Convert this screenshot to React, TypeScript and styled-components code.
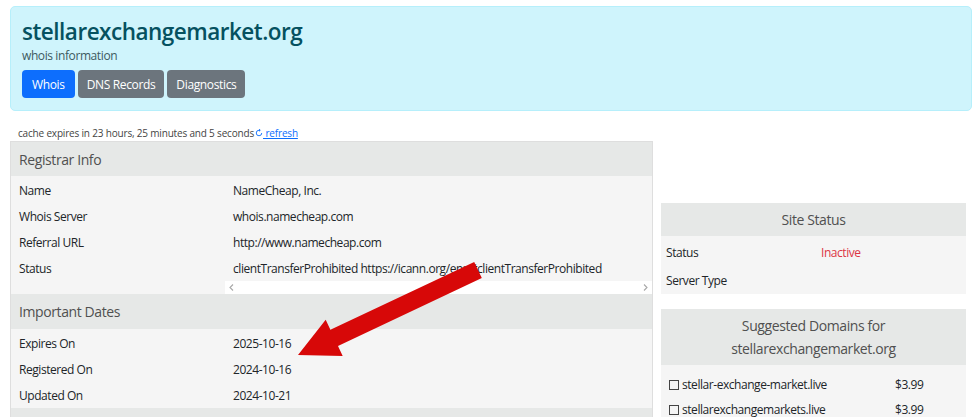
import React from "react";
import styled, { createGlobalStyle } from "styled-components";

const GlobalStyle = createGlobalStyle`
  html, body { margin: 0; padding: 0; background: #fff; }
  body { font-family: "Open Sans", "Noto Sans", Arial, sans-serif; color: #212529; }
  * { box-sizing: border-box; }
`;

const Page = styled.div`
  position: relative;
  width: 974px;
  height: 417px;
  overflow: hidden;
  padding: 6px 2px 0 10px;
`;

const Hero = styled.header`
  height: 105px;
  background: #cff4fc;
  border: 1px solid #b6effb;
  border-radius: 5px;
  padding: 9px 11px 0;
`;

const Title = styled.h1`
  margin: 0;
  font-size: 22.5px;
  line-height: 32px;
  font-weight: 600;
  color: #055160;
  letter-spacing: -0.5px;
`;

const Subtitle = styled.div`
  font-size: 12px;
  line-height: 16px;
  letter-spacing: -0.4px;
  color: #3d5a60;
`;

const Tabs = styled.nav`
  display: flex;
  gap: 3px;
  margin-top: 6px;
`;

const TabButton = styled.button<{ $active?: boolean }>`
  height: 28px;
  padding: 0 ${(p) => (p.$active ? 10 : 9)}px;
  border: none;
  border-radius: 4px;
  font-family: inherit;
  font-size: 12px;
  letter-spacing: -0.35px;
  color: #fff;
  background: ${(p) => (p.$active ? "#0d6efd" : "#6c757d")};
`;

const CacheLine = styled.div`
  display: flex;
  align-items: center;
  margin: 15px 0 1px 8px;
  font-size: 10px;
  line-height: 14px;
  letter-spacing: -0.18px;
  color: #444;
`;

const RefreshLink = styled.a`
  display: inline-flex;
  align-items: center;
  color: #0d6efd;
  text-decoration: underline;
  white-space: pre;
  margin-left: 1px;
`;

const Columns = styled.div`
  display: flex;
  gap: 8px;
  align-items: flex-start;
`;

const LeftCard = styled.section`
  width: 643px;
  border: 1px solid #dedede;
  border-bottom: none;
  background: #f5f5f5;
`;

const SectionHeader = styled.div<{ $center?: boolean; $h?: number }>`
  min-height: ${(p) => p.$h ?? 34}px;
  display: flex;
  align-items: center;
  justify-content: ${(p) => (p.$center ? "center" : "flex-start")};
  text-align: ${(p) => (p.$center ? "center" : "left")};
  padding: 0 8px;
  background: #e6e8e7;
  font-size: 14px;
  letter-spacing: -0.4px;
  line-height: 23px;
  color: #505050;
`;

const InfoTable = styled.div<{ $cols: string; $pad?: string }>`
  display: grid;
  grid-template-columns: ${(p) => p.$cols};
  padding: ${(p) => p.$pad ?? "0"};
`;

const Cell = styled.div<{ $h?: number; $pl?: number; $color?: string }>`
  height: ${(p) => p.$h ?? 26}px;
  display: flex;
  align-items: center;
  padding-left: ${(p) => p.$pl ?? 8}px;
  font-size: 12px;
  letter-spacing: -0.45px;
  color: ${(p) => p.$color ?? "#212529"};
  white-space: nowrap;
  overflow: hidden;
`;

const ScrollStrip = styled.div`
  height: 13px;
  background: #fff;
  display: flex;
  align-items: center;
  justify-content: space-between;
  padding: 0 4px 0 4px;
`;

const RightColumn = styled.aside`
  width: 305px;
  margin-top: 62px;
  display: flex;
  flex-direction: column;
  gap: 15px;
`;

const SideCard = styled.section`
  background: #f5f5f5;
`;

const Check = styled.span`
  display: inline-block;
  width: 10px;
  height: 10px;
  border: 1px solid #444;
  margin-right: 3px;
  flex: none;
`;

const ArrowLayer = styled.svg`
  position: absolute;
  left: 0;
  top: 0;
  pointer-events: none;
`;

const registrar: [string, string][] = [
  ["Name", "NameCheap, Inc."],
  ["Whois Server", "whois.namecheap.com"],
  ["Referral URL", "http://www.namecheap.com"],
  ["Status", "clientTransferProhibited https://icann.org/epp#clientTransferProhibited"],
];

const dates: [string, string][] = [
  ["Expires On", "2025-10-16"],
  ["Registered On", "2024-10-16"],
  ["Updated On", "2024-10-21"],
];

const suggestions: [string, string][] = [
  ["stellar-exchange-market.live", "$3.99"],
  ["stellarexchangemarkets.live", "$3.99"],
];

const Chevron = ({ dir }: { dir: "left" | "right" }) => (
  <svg width="5" height="7" viewBox="0 0 5 7" fill="none" stroke="#a8a8a8" strokeWidth="1.1">
    <path d={dir === "left" ? "M4 0.5L1 3.5L4 6.5" : "M1 0.5L4 3.5L1 6.5"} />
  </svg>
);

export default function App() {
  return (
    <>
      <GlobalStyle />
      <Page>
        <Hero>
          <Title>stellarexchangemarket.org</Title>
          <Subtitle>whois information</Subtitle>
          <Tabs>
            <TabButton $active>Whois</TabButton>
            <TabButton>DNS Records</TabButton>
            <TabButton>Diagnostics</TabButton>
          </Tabs>
        </Hero>

        <CacheLine>
          cache expires in 23 hours, 25 minutes and 5 seconds
          <RefreshLink href="#">
            <svg width="8" height="8" viewBox="0 0 16 16" fill="none" stroke="#0d6efd" strokeWidth="1.8">
              <path d="M13.5 8A5.5 5.5 0 1 1 8 2.5" />
              <path d="M8 0.5L10.5 2.5L8 4.5" fill="#0d6efd" />
            </svg>
            {" refresh"}
          </RefreshLink>
        </CacheLine>

        <Columns>
          <LeftCard>
            <SectionHeader>Registrar Info</SectionHeader>
            <InfoTable $cols="214px 1fr" $pad="1px 0 0">
              {registrar.map(([k, v]) => (
                <React.Fragment key={k}>
                  <Cell>{k}</Cell>
                  <Cell>{v}</Cell>
                </React.Fragment>
              ))}
              <div />
              <ScrollStrip>
                <Chevron dir="left" />
                <Chevron dir="right" />
              </ScrollStrip>
            </InfoTable>
            <SectionHeader $h={35}>Important Dates</SectionHeader>
            <InfoTable $cols="214px 1fr" $pad="1px 0 0">
              {dates.map(([k, v]) => (
                <React.Fragment key={k}>
                  <Cell>{k}</Cell>
                  <Cell>{v}</Cell>
                </React.Fragment>
              ))}
            </InfoTable>
            <SectionHeader />
          </LeftCard>

          <RightColumn>
            <SideCard>
              <SectionHeader $center $h={33}>Site Status</SectionHeader>
              <InfoTable $cols="160px 1fr" $pad="2px 0 0">
                <Cell $h={28} $pl={5}>Status</Cell>
                <Cell $h={28} $pl={0} $color="#dc3545">Inactive</Cell>
                <Cell $h={28} $pl={5}>Server Type</Cell>
                <Cell $h={28} $pl={0}></Cell>
              </InfoTable>
            </SideCard>
            <SideCard>
              <SectionHeader $center $h={56}>
                Suggested Domains for
                <br />
                stellarexchangemarket.org
              </SectionHeader>
              <InfoTable $cols="234px 1fr" $pad="7px 0 0">
                {suggestions.map(([d, p]) => (
                  <React.Fragment key={d}>
                    <Cell $h={25}>
                      <Check />
                      {d}
                    </Cell>
                    <Cell $h={25} $pl={0}>{p}</Cell>
                  </React.Fragment>
                ))}
              </InfoTable>
            </SideCard>
          </RightColumn>
        </Columns>

        <ArrowLayer width="974" height="417" viewBox="0 0 974 417">
          <polygon
            points="298,355 342.7,356 338,346 481.8,278.1 474.2,261.9 330.4,329.8 325.7,319.8"
            fill="#d70808"
          />
        </ArrowLayer>
      </Page>
    </>
  );
}
